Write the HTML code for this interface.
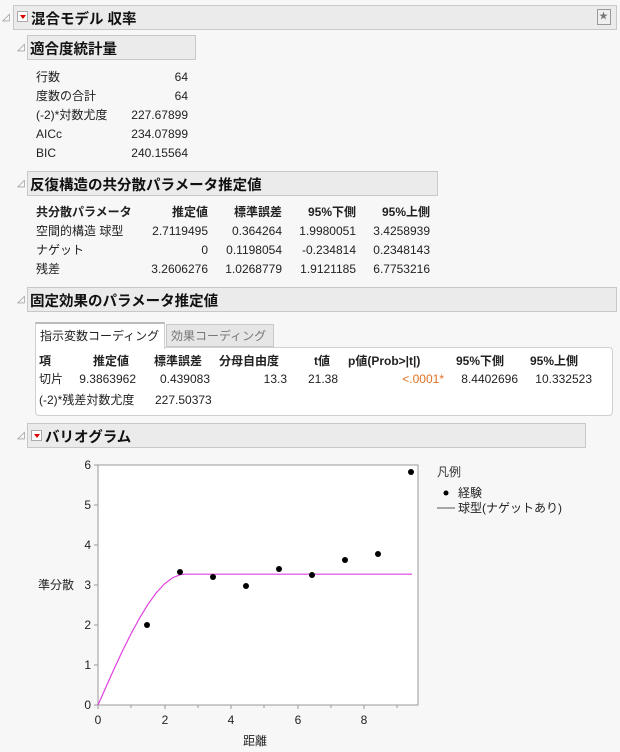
<!DOCTYPE html>
<html><head><meta charset="utf-8"><style>
body{margin:0;width:620px;height:752px;background:#f7f7f7;position:relative;overflow:hidden;font-family:"Liberation Sans","Noto Sans CJK JP",sans-serif;font-size:12px;color:#222}
.a{position:absolute;white-space:nowrap;line-height:14px}
.b{font-weight:bold}
.hdr{position:absolute;background:#ebebeb;border:1px solid #c8c8c8;box-sizing:border-box}
.h{position:absolute;font-weight:bold;font-size:14.5px;white-space:nowrap;color:#111}
.rb{position:absolute;width:11px;height:11px;border:1px solid #aaa;background:#fff;box-sizing:border-box}
.rb:after{content:"";position:absolute;left:2px;top:3px;border-left:3px solid transparent;border-right:3px solid transparent;border-top:4px solid #d00}
</style></head><body>
<div class="hdr" style="left:13px;top:5px;width:604px;height:25px"></div>
<div class="a" style="left:2px;top:11px;color:#888;font-size:10px">◿</div>
<div class="rb" style="left:17px;top:11px"></div>
<div class="h" style="left:31px;top:8px">混合モデル 収率</div>
<div style="position:absolute;left:597px;top:9px;width:12px;height:14px;border:1px solid #999;background:#eee"></div>
<div class="a" style="left:599px;top:9px;font-size:9px;color:#777">★</div>

<div class="hdr" style="left:27px;top:35px;width:169px;height:25px"></div>
<div class="a" style="left:17px;top:41px;color:#888;font-size:10px">◿</div>
<div class="h" style="left:30px;top:38px">適合度統計量</div>
<div class="a" style="left:36px;top:70px">行数</div><div class="a" style="right:432px;top:70px">64</div>
<div class="a" style="left:36px;top:89px">度数の合計</div><div class="a" style="right:432px;top:89px">64</div>
<div class="a" style="left:36px;top:108px">(-2)*対数尤度</div><div class="a" style="right:432px;top:108px">227.67899</div>
<div class="a" style="left:36px;top:127px">AICc</div><div class="a" style="right:432px;top:127px">234.07899</div>
<div class="a" style="left:36px;top:146px">BIC</div><div class="a" style="right:432px;top:146px">240.15564</div>

<div class="hdr" style="left:27px;top:171px;width:411px;height:25px"></div>
<div class="a" style="left:17px;top:177px;color:#888;font-size:10px">◿</div>
<div class="h" style="left:30px;top:174px">反復構造の共分散パラメータ推定値</div>
<div class="a b" style="left:36px;top:205px">共分散パラメータ</div>
<div class="a b" style="right:412px;top:205px">推定値</div>
<div class="a b" style="right:338px;top:205px">標準誤差</div>
<div class="a b" style="right:264px;top:205px">95%下側</div>
<div class="a b" style="right:190px;top:205px">95%上側</div>
<div class="a" style="left:36px;top:224px">空間的構造 球型</div>
<div class="a" style="right:412px;top:224px">2.7119495</div><div class="a" style="right:338px;top:224px">0.364264</div><div class="a" style="right:264px;top:224px">1.9980051</div><div class="a" style="right:190px;top:224px">3.4258939</div>
<div class="a" style="left:36px;top:243px">ナゲット</div>
<div class="a" style="right:412px;top:243px">0</div><div class="a" style="right:338px;top:243px">0.1198054</div><div class="a" style="right:264px;top:243px">-0.234814</div><div class="a" style="right:190px;top:243px">0.2348143</div>
<div class="a" style="left:36px;top:262px">残差</div>
<div class="a" style="right:412px;top:262px">3.2606276</div><div class="a" style="right:338px;top:262px">1.0268779</div><div class="a" style="right:264px;top:262px">1.9121185</div><div class="a" style="right:190px;top:262px">6.7753216</div>

<div class="hdr" style="left:27px;top:287px;width:590px;height:25px"></div>
<div class="a" style="left:17px;top:293px;color:#888;font-size:10px">◿</div>
<div class="h" style="left:30px;top:290px">固定効果のパラメータ推定値</div>
<div style="position:absolute;left:35px;top:347px;width:578px;height:69px;border:1px solid #d0d0d0;border-radius:4px;background:#fff;box-sizing:border-box"></div>
<div style="position:absolute;left:35px;top:322px;width:130px;height:27px;background:#fff;border:1px solid #d0d0d0;border-bottom:none;border-top:2px solid #bbb;box-sizing:border-box"></div>
<div style="position:absolute;left:166px;top:324px;width:108px;height:23px;background:#e6e6e6;border:1px solid #c8c8c8;box-sizing:border-box"></div>
<div class="a" style="left:40px;top:329px">指示変数コーディング</div>
<div class="a" style="left:171px;top:329px;color:#777">効果コーディング</div>
<div class="a b" style="left:39px;top:354px">項</div>
<div class="a b" style="left:93px;top:354px">推定値</div>
<div class="a b" style="left:154px;top:354px">標準誤差</div>
<div class="a b" style="left:219px;top:354px">分母自由度</div>
<div class="a b" style="right:290px;top:354px">t値</div>
<div class="a b" style="left:348px;top:354px">p値(Prob&gt;|t|)</div>
<div class="a b" style="left:456px;top:354px">95%下側</div>
<div class="a b" style="left:530px;top:354px">95%上側</div>
<div class="a" style="left:39px;top:372px">切片</div>
<div class="a" style="right:484px;top:372px">9.3863962</div>
<div class="a" style="right:410px;top:372px">0.439083</div>
<div class="a" style="right:333px;top:372px">13.3</div>
<div class="a" style="right:282px;top:372px">21.38</div>
<div class="a" style="right:176px;top:372px;color:#e07020">&lt;.0001*</div>
<div class="a" style="right:102px;top:372px">8.4402696</div>
<div class="a" style="right:28px;top:372px">10.332523</div>
<div class="a" style="left:39px;top:393px">(-2)*残差対数尤度</div>
<div class="a" style="left:155px;top:393px">227.50373</div>

<div class="hdr" style="left:27px;top:423px;width:559px;height:25px"></div>
<div class="a" style="left:17px;top:429px;color:#888;font-size:10px">◿</div>
<div class="rb" style="left:31px;top:430px"></div>
<div class="h" style="left:45px;top:426px">バリオグラム</div>

<svg style="position:absolute;left:0;top:0" width="620" height="752">
<rect x="98" y="465" width="320" height="240" fill="#fff" stroke="#999"/>
<g stroke="#999"><line x1="98" y1="705" x2="98" y2="709"/><line x1="131" y1="705" x2="131" y2="708"/><line x1="165" y1="705" x2="165" y2="709"/><line x1="198" y1="705" x2="198" y2="708"/><line x1="231" y1="705" x2="231" y2="709"/><line x1="264" y1="705" x2="264" y2="708"/><line x1="298" y1="705" x2="298" y2="709"/><line x1="331" y1="705" x2="331" y2="708"/><line x1="364" y1="705" x2="364" y2="709"/><line x1="397" y1="705" x2="397" y2="708"/>
<line x1="94" y1="465" x2="98" y2="465"/><line x1="94" y1="505" x2="98" y2="505"/><line x1="94" y1="545" x2="98" y2="545"/><line x1="94" y1="585" x2="98" y2="585"/><line x1="94" y1="625" x2="98" y2="625"/><line x1="94" y1="665" x2="98" y2="665"/><line x1="94" y1="705" x2="98" y2="705"/></g>
<g font-family="Liberation Sans,sans-serif" font-size="12" fill="#222" text-anchor="end">
<text x="91" y="469">6</text><text x="91" y="509">5</text><text x="91" y="549">4</text><text x="91" y="589">3</text><text x="91" y="629">2</text><text x="91" y="669">1</text><text x="91" y="709">0</text></g>
<g font-family="Liberation Sans,sans-serif" font-size="12" fill="#222" text-anchor="middle">
<text x="98" y="724">0</text><text x="165" y="724">2</text><text x="231" y="724">4</text><text x="298" y="724">6</text><text x="364" y="724">8</text></g>
<polyline fill="none" stroke="#e040e0" stroke-width="1.2" points="98,705 106.3,686.2 114.6,667.7 122.9,650 131.3,633.3 139.6,618 147.9,604.4 156.2,592.9 164.5,583.9 172.8,577.6 181.1,574.5 184.5,574.2 412,574.2"/>
<g fill="#000"><circle cx="147" cy="625" r="3"/><circle cx="180" cy="572" r="3"/><circle cx="213" cy="577" r="3"/><circle cx="246" cy="586" r="3"/><circle cx="279" cy="569" r="3"/><circle cx="312" cy="575" r="3"/><circle cx="345" cy="560" r="3"/><circle cx="378" cy="554" r="3"/><circle cx="411" cy="472" r="3"/>
<circle cx="446" cy="493" r="2.5"/></g>
<line x1="437" y1="508" x2="455" y2="508" stroke="#555"/>
</svg>
<div class="a" style="left:38px;top:578px">準分散</div>
<div class="a" style="left:243px;top:734px">距離</div>
<div class="a" style="left:437px;top:465px;color:#333">凡例</div>
<div class="a" style="left:458px;top:486px">経験</div>
<div class="a" style="left:458px;top:501px">球型(ナゲットあり)</div>
</body></html>
